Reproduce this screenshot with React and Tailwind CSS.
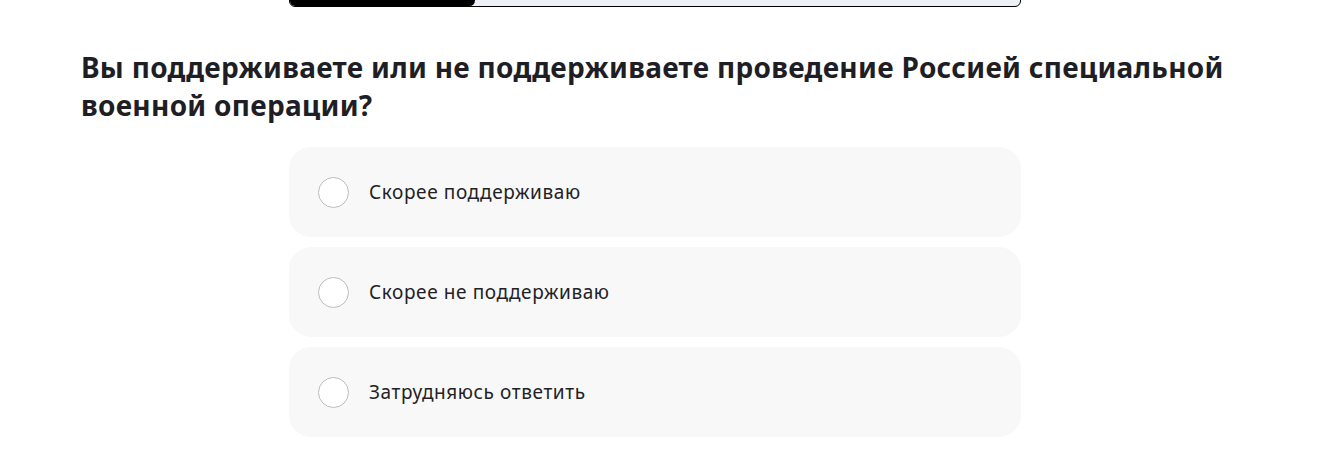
import React, { useState } from 'react';

const options = ['Скорее поддерживаю', 'Скорее не поддерживаю', 'Затрудняюсь ответить'];

const Option = ({ label, checked, onSelect }) => (
  <button
    type="button"
    onClick={onSelect}
    className="flex h-[90px] w-full items-center rounded-[22px] bg-[#f8f8f8] pl-[29px] text-left"
  >
    <span className="flex h-[31px] w-[31px] shrink-0 items-center justify-center rounded-full border border-[#bdbdbd] bg-white">
      {checked && <span className="h-[15px] w-[15px] rounded-full bg-black" />}
    </span>
    <span className="ml-[20px] text-[19px] tracking-[0.6px] text-[#222226]">{label}</span>
  </button>
);

export default function App() {
  const [answer, setAnswer] = useState(null);

  return (
    <div className="min-h-[463px] bg-white font-['Noto_Sans',sans-serif]">
      {/* survey progress */}
      <div className="ml-[289px] -mt-[6px] h-[13px] w-[732px] overflow-hidden rounded-[6px] border border-black bg-[#edf1f5]">
        <div className="h-full w-[185px] rounded-r-[6px] bg-black" />
      </div>

      <h1 className="ml-[81px] mt-[41px] max-w-[1200px] text-[28px] font-bold leading-[38px] tracking-[0.3px] text-[#1e1e24]">
        Вы поддерживаете или не поддерживаете проведение Россией специальной военной операции?
      </h1>

      <div className="ml-[289px] mt-[23px] flex w-[732px] flex-col gap-[10px]">
        {options.map((o, i) => (
          <Option key={o} label={o} checked={answer === i} onSelect={() => setAnswer(i)} />
        ))}
      </div>
    </div>
  );
}
